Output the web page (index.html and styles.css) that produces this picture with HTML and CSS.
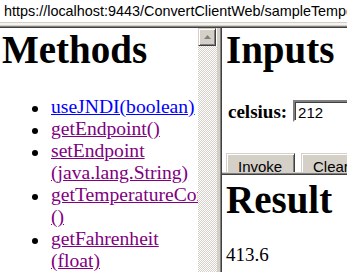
FILE: index.html
```html
<!DOCTYPE html>
<html>
<head>
<meta charset="utf-8">
<title>Test Client</title>
<link rel="stylesheet" href="styles.css">
</head>
<body>
<div class="urlbar">https://localhost:9443/ConvertClientWeb/sampleTemperatureConverterProxy/TestClient.jsp</div>
<div class="topedge"></div>
<div class="frames">
  <div class="frame-left">
    <div class="left-content">
      <h1 class="title">Methods</h1>
      <ul class="methods">
        <li><a href="#" class="link-new">useJNDI(boolean)</a></li>
        <li><a href="#" class="link-visited">getEndpoint()</a></li>
        <li><a href="#" class="link-visited">setEndpoint<br>(java.lang.String)</a></li>
        <li><a href="#" class="link-visited">getTemperatureConverter<br>()</a></li>
        <li><a href="#" class="link-visited">getFahrenheit<br>(float)</a></li>
        <li><a href="#" class="link-visited">getCelsius<br>(float)</a></li>
      </ul>
    </div>
    <div class="scrollbar">
      <div class="sb-up">
        <svg width="7" height="4" viewBox="0 0 7 4"><polygon points="3.5,0 7,4 0,4" fill="#808080"/></svg>
      </div>
      <div class="sb-track"></div>
    </div>
  </div>
  <div class="vdivider"></div>
  <div class="right">
    <div class="frame-inputs">
      <h1 class="title">Inputs</h1>
      <div class="field-row">
        <span class="field-label">celsius:</span>
        <input class="field-input" type="text" value="212">
      </div>
      <div class="button-row">
        <button class="btn btn-invoke">Invoke</button>
        <button class="btn btn-clear">Clear</button>
      </div>
    </div>
    <div class="hdivider"></div>
    <div class="frame-result">
      <h1 class="title">Result</h1>
      <div class="result-value">413.6</div>
    </div>
  </div>
</div>
</body>
</html>
```

FILE: styles.css
```css
html, body {
  margin: 0;
  padding: 0;
}
body {
  width: 347px;
  height: 272px;
  overflow: hidden;
  background: #ffffff;
  font-family: "Liberation Serif", "Times New Roman", serif;
  font-size: 19px;
  color: #000;
  display: flex;
  flex-direction: column;
}
.urlbar {
  height: 22px;
  line-height: 22px;
  padding-left: 4px;
  white-space: nowrap;
  overflow: hidden;
  font-family: "Liberation Sans", Arial, sans-serif;
  font-size: 14.4px;
  color: #000;
  flex: none;
}
.topedge {
  flex: none;
  height: 6px;
  background: linear-gradient(to bottom, #d4d0c8 0 1px, #f4f3ee 1px 3px, #d4d0c8 3px 4px, #808080 4px 5px, #404040 5px 6px);
}
.frames {
  flex: 1;
  display: flex;
  min-height: 0;
}
.frame-left {
  width: 217px;
  flex: none;
  display: flex;
  overflow: hidden;
}
.left-content {
  width: 196px;
  flex: none;
  overflow: hidden;
  padding-left: 2px;
}
.title {
  font-family: "Liberation Serif", "Times New Roman", serif;
  font-weight: bold;
  font-size: 39px;
  line-height: 44px;
  margin: 0;
  white-space: nowrap;
}
.methods {
  margin: 24px 0 0 0;
  padding-left: 30px;
  list-style: none;
  font-size: 19.6px;
  line-height: 22px;
  white-space: nowrap;
}
.methods li {
  display: flex;
  align-items: flex-start;
}
.methods li::before {
  content: "";
  flex: none;
  width: 6px;
  height: 6px;
  margin-top: 10px;
  margin-right: 13px;
  border-radius: 50%;
  background: #000;
}
.methods a {
  text-decoration: underline;
}
.link-new {
  color: #0000ff;
}
.link-visited {
  color: #800080;
}
.scrollbar {
  width: 19px;
  flex: none;
  display: flex;
  flex-direction: column;
}
.sb-up {
  height: 18px;
  width: 18px;
  box-sizing: border-box;
  background: #d4d0c8;
  border-top: 1px solid #d4d0c8;
  border-left: 1px solid #d4d0c8;
  border-right: 1px solid #404040;
  border-bottom: 1px solid #404040;
  box-shadow: inset 1px 1px 0 #ffffff, inset -1px -1px 0 #808080;
  display: flex;
  align-items: center;
  justify-content: center;
  flex: none;
}
.sb-track {
  flex: 1;
  background: repeating-conic-gradient(#d4d0c8 0 25%, #ffffff 0 50%) 0 0 / 2px 2px;
}
.vdivider {
  width: 5px;
  flex: none;
  background: linear-gradient(to right, #d4d0c8 0 3px, #808080 3px 4px, #404040 4px 5px);
}
.right {
  flex: 1;
  display: flex;
  flex-direction: column;
  min-width: 0;
}
.frame-inputs {
  height: 144px;
  flex: none;
  overflow: hidden;
  padding-left: 4px;
}
.field-row {
  margin-top: 28px;
  display: flex;
  align-items: baseline;
  gap: 6px;
  white-space: nowrap;
}
.field-label {
  font-weight: bold;
  margin-left: 2px;
}
.field-input {
  flex: none;
  width: 120px;
  height: 22px;
  box-sizing: border-box;
  padding: 2px 3px 0;
  margin: 0;
  font-family: "Liberation Sans", Arial, sans-serif;
  font-size: 15px;
  border: 2px solid;
  border-color: #808080 #ffffff #ffffff #808080;
  box-shadow: inset 1px 1px 0 #404040;
  background: #fff;
  color: #000;
  outline: none;
}
.button-row {
  margin-top: 30px;
  display: flex;
  gap: 6px;
  white-space: nowrap;
}
.btn {
  flex: none;
  height: 26px;
  margin: 0;
  padding: 2px 11px 0;
  box-sizing: border-box;
  font-family: "Liberation Sans", Arial, sans-serif;
  font-size: 15px;
  color: #000;
  background: #d4d0c8;
  border: 1px solid;
  border-color: #d4d0c8 #404040 #404040 #d4d0c8;
  box-shadow: inset 1px 1px 0 #ffffff, inset -1px -1px 0 #808080;
  text-align: left;
}
.btn-invoke {
  width: 69px;
}
.btn-clear {
  width: 60px;
}
.hdivider {
  height: 3px;
  flex: none;
  background: linear-gradient(to bottom, #d4d0c8 0 1px, #808080 1px 2px, #404040 2px 3px);
}
.frame-result {
  flex: 1;
  overflow: hidden;
  padding-left: 4px;
  padding-top: 3px;
}
.result-value {
  margin-top: 22px;
  line-height: 22px;
}
```
